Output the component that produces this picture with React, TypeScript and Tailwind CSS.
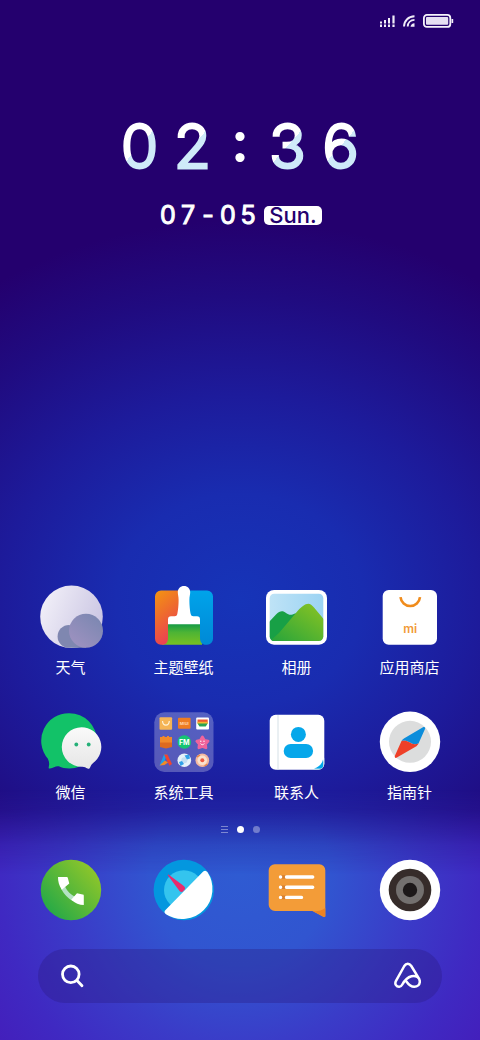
import type { ReactNode } from "react";

type AppItem = {
  name: string;
  icon: ReactNode;
};

function WeatherIcon() {
  return (
    <>
      <defs>
        <linearGradient id="moon" x1="0" y1="0.3" x2="1" y2="0.7">
          <stop offset="0" stopColor="#f1eff8" />
          <stop offset="1" stopColor="#c9c4e2" />
        </linearGradient>
        <linearGradient id="cloud" x1="0" y1="1" x2="0.8" y2="0">
          <stop offset="0" stopColor="#a293c2" />
          <stop offset="1" stopColor="#7b87b1" />
        </linearGradient>
      </defs>
      <circle cx="32.5" cy="31.8" r="31.3" fill="url(#moon)" />
      <path d="M30 40a11.4 11.4 0 0 0 0 22.8h17V46z" fill="#7f87b0" />
      <circle cx="47" cy="45.8" r="17" fill="url(#cloud)" />
    </>
  );
}

function ThemeIcon() {
  return (
    <>
      <defs>
        <linearGradient id="themeWarm" x1="0" y1="0" x2="0.4" y2="1">
          <stop offset="0" stopColor="#f39511" />
          <stop offset="0.5" stopColor="#ee6a2e" />
          <stop offset="1" stopColor="#ea3f55" />
        </linearGradient>
        <linearGradient id="themeBlue" x1="0" y1="0" x2="0" y2="1">
          <stop offset="0" stopColor="#00a3ea" />
          <stop offset="1" stopColor="#0089d6" />
        </linearGradient>
        <linearGradient id="themeGreen" x1="0" y1="0" x2="0" y2="1">
          <stop offset="0" stopColor="#159a45" />
          <stop offset="0.4" stopColor="#4db435" />
          <stop offset="1" stopColor="#78c022" />
        </linearGradient>
      </defs>
      <path d="M14 39h36v20.800H10z" fill="url(#themeGreen)" />
      <path d="M9 5.5h19V33H16v20c0 4-2 6.8-6 6.8H9a6 6 0 0 1-6-6V11.500a6 6 0 0 1 6-6z" fill="url(#themeWarm)" />
      <path d="M55 5.500H36V33h12v20c0 4 2 6.800 6 6.800h1a6 6 0 0 0 6-6V11.500a6 6 0 0 0-6-6z" fill="url(#themeBlue)" />
      <path
        d="M32 1c3.600 0 6.200 2.600 6.200 6.200 0 2.500-.8 4-.8 7.800 0 5 .6 11 1.300 14 .4 1.600 1.200 2.200 2.600 2.200H45c2 0 3 1 3 3v5.100H16v-5.100c0-2 1-3 3-3h3.700c1.400 0 2.200-.6 2.600-2.200.7-3 1.300-9 1.300-14 0-3.800-.8-5.300-.8-7.800C25.800 3.600 28.400 1 32 1z"
        fill="#fff"
      />
    </>
  );
}

function GalleryIcon() {
  return (
    <>
      <defs>
        <linearGradient id="sky" x1="0" y1="0" x2="1" y2="0">
          <stop offset="0" stopColor="#bfe3f6" />
          <stop offset="1" stopColor="#9bd3f3" />
        </linearGradient>
        <linearGradient id="hill" x1="0" y1="1" x2="1" y2="0">
          <stop offset="0" stopColor="#23a33c" />
          <stop offset="1" stopColor="#8cc422" />
        </linearGradient>
        <clipPath id="photo">
          <rect x="4.700" y="8.700" width="53.600" height="47.400" rx="4.500" />
        </clipPath>
      </defs>
      <rect x="1" y="5" width="61" height="54.700" rx="8" fill="#fff" />
      <g clipPath="url(#photo)">
        <rect x="4" y="8" width="55" height="49" fill="url(#sky)" />
        <path d="M4 37l7-7.500c4-4 7-4 10-1.500 3 2 5 2.500 9 .5h6V57H4z" fill="#18a046" />
        <path d="M4 57l10-9 19-22.500c2-2.200 3-3 5-4.500 4.500-3.500 7.500-3 11 1.500l10 12V57z" fill="url(#hill)" />
      </g>
    </>
  );
}

function StoreIcon() {
  return (
    <>
      <rect x="4.700" y="5" width="54.300" height="54.700" rx="6" fill="#fff" />
      <path d="M22.500 12.200a9.800 9.800 0 0 0 19.500 0" fill="none" stroke="#f08c1c" strokeWidth="2.600" />
      <text x="32.200" y="48.300" textAnchor="middle" fill="#f29a38" className="font-['Inter'] text-[12px] font-semibold">
        mi
      </text>
    </>
  );
}

function WechatIcon() {
  return (
    <>
      <defs>
        <linearGradient id="bubble" x1="0" y1="0" x2="0" y2="1">
          <stop offset="0" stopColor="#fafafa" />
          <stop offset="1" stopColor="#e6e6e6" />
        </linearGradient>
      </defs>
      <path
        d="M30.300 3.200a27.600 27.600 0 1 1 0 55.300c-4 0-7.500-.8-10.500-2.200-3-.6-5.500 1.500-8.800 2.200-1 .3-1.500-.2-1.300-1.200.8-3 .6-5.500-.8-8.500A27.600 27.600 0 0 1 30.300 3.200z"
        fill="#12c268"
      />
      <path
        d="M42.600 17.200a19.800 19.800 0 0 1 11 36.200c-2 1.800-2 3.200-3 4.800-.6.800-1.200.8-2 .4-2-1-3.200-2-6-1.800A19.800 19.800 0 1 1 42.600 17.200z"
        fill="url(#bubble)"
      />
      <circle cx="37.300" cy="34.500" r="1.900" fill="#25b078" />
      <circle cx="49.700" cy="34.500" r="1.900" fill="#25b078" />
    </>
  );
}

function FolderIcon() {
  return (
    <>
      <rect x="2.300" y="2.300" width="59.200" height="59.700" rx="10" fill="#fff" fillOpacity="0.26" />

      <rect x="7.500" y="7.200" width="12.600" height="12.600" rx="1" fill="#f5b455" />
      <path d="M10.500 11c.4 5.500 6.400 5.500 6.800 0" fill="none" stroke="#fff3d8" strokeWidth="1.200" />

      <rect x="26" y="7.800" width="12.600" height="11" rx="1" fill="#ee7c22" />
      <text x="32.300" y="15" textAnchor="middle" fill="#ffd9b0" className="font-['Inter'] text-[4px] font-bold">
        MIUI
      </text>

      <rect x="44.200" y="7.500" width="12.800" height="12" rx="1" fill="#fff" />
      <path d="M45.500 9.500h10.200V13H45.500z" fill="#ef5a33" />
      <path d="M45.500 11.800h10.200V14H45.500z" fill="#f5b62e" />
      <path d="M45.500 13.500h10.200l-2 3h-6.200z" fill="#2aa454" />

      <path d="M8 27h2.500v-1h2v1h2.500v-1h2v1H20v6H8z" fill="#f08a2c" />
      <path d="M8 32.500h12V37l-6 1.500L8 37z" fill="#dd6a20" />

      <circle cx="32.300" cy="32" r="6.800" fill="#16c572" />
      <text x="32.300" y="34.500" textAnchor="middle" fill="#fff" className="font-['Inter'] text-[7px] font-bold">
        FM
      </text>

      <path
        d="M50.400 27l1.900 3.300 3.700.9-2.500 2.900.4 3.700-3.500-1.300-3.500 1.300.4-3.700-2.500-2.900 3.700-.9z"
        fill="#f0649c"
        stroke="#f0649c"
        strokeWidth="2.800"
        strokeLinejoin="round"
      />
      <path d="M48.500 33.500c.8 1.600 3 1.600 3.800 0" fill="none" stroke="#fff" strokeWidth="0.900" />
      <circle cx="48.800" cy="31.300" r="0.700" fill="#fff" />
      <circle cx="52" cy="31.300" r="0.700" fill="#fff" />

      <path d="M12 44.500h3l-3.500 9.500-4 1.500z" fill="#1da0ea" />
      <path d="M12 44.500h3.400L20 54l-2.500 1.800z" fill="#ef4430" />
      <path d="M7.500 55.500l5.500-5 3 2-3.500 2.500z" fill="#f28a26" />

      <circle cx="32.300" cy="50.300" r="6.800" fill="#e6f2fa" />
      <circle cx="32.300" cy="50.300" r="3" fill="#c3dff2" />
      <path d="M32.500 45.500l4.500-1 1 4-3 1zM27 52l3-1 2 3-3.500 2z" fill="#30a1e8" />

      <circle cx="50.300" cy="50.300" r="6.800" fill="#f4b9a0" />
      <circle cx="50.300" cy="50.300" r="4.800" fill="#fae3cd" />
      <circle cx="50.300" cy="50.300" r="2" fill="#ee5a41" />
      <path d="M45 47l3-2M55.500 54l-3 2" stroke="#e9853f" strokeWidth="1.200" />
    </>
  );
}

function ContactsIcon() {
  return (
    <>
      <rect x="4.700" y="4.700" width="54.600" height="55" rx="6" fill="#fff" />
      <path d="M13 5v54.700" stroke="#d5e0e6" strokeWidth="1" />
      <path d="M59.300 47.500v6.200a6 6 0 0 1-6 6h-6.800c6.800-1 11.800-5.500 12.800-12.200z" fill="#b3d9ea" />
      <path d="M58 49.500v6.500c0 1.400-1 2.500-2.500 2.500H49c4.800-1.200 8-4.500 9-9z" fill="#00a5ea" />
      <circle cx="33.400" cy="24.400" r="7.500" fill="#06a7ea" />
      <rect x="18.700" y="34" width="29.400" height="14" rx="7" fill="#06a7ea" />
    </>
  );
}

function CompassIcon() {
  return (
    <>
      <circle cx="32" cy="31.800" r="30.200" fill="#fff" />
      <circle cx="32" cy="31.800" r="21" fill="#dcdddd" />
      <path d="M23.500 31c.6-1 1.500-2 2.800-2.800L45 17.200c1.500-.8 2.600.2 2 1.800l-6.500 14.500c-3.500 1.200-6.300.7-9-1.200-2.500-1.800-5-2-8-1.300z" fill="#0c8ddb" />
      <path d="M23.500 31l-6.600 14.800c-.6 1.600.5 2.600 2 1.800l18.600-10.800c1.300-.8 2.400-2 3-3.300-3.500 1.200-6.300.7-9-1.200-2.500-1.800-5-2-8-1.300z" fill="#ee4028" />
    </>
  );
}

function PhoneIcon() {
  return (
    <>
      <defs>
        <linearGradient id="call" x1="0.100" y1="0.850" x2="0.900" y2="0.150">
          <stop offset="0" stopColor="#25a947" />
          <stop offset="1" stopColor="#8fc62a" />
        </linearGradient>
      </defs>
      <circle cx="32" cy="32" r="30.200" fill="url(#call)" />
      <path d="M22 30l4-1.500c2.500 5 5.500 8 10.500 10.500L34 43c-5-2.500-9.500-7-12-13z" fill="#b4e2c4" />
      <path d="M19 19h8.500c.8 0 1.300.4 1.400 1.200l1.400 5.300-7.500 6.300C20 27.500 19 23.500 19 19z" fill="#fff" />
      <path d="M44.800 47v-9.300c0-.8-.4-1.300-1.200-1.300L38 35.200l-5.800 6.500C36 45.200 40.500 47 44.800 47z" fill="#fff" />
    </>
  );
}

function BrowserIcon() {
  return (
    <>
      <circle cx="31.800" cy="32" r="30.200" fill="#0397df" />
      <circle cx="31.800" cy="32" r="19.800" fill="#34c4ee" />
      <path d="M15.800 17.200c0-.6.600-.8 1-.4l13.700 10.200c2.500 1.800 3 3 2.200 4.500l-2.500 2.500c-1.500.2-2.600-.6-3.600-2.200z" fill="#ea2b6c" />
      <path d="M51.200 13.600c1.600-1.500 3-1.200 4.200.5A30.200 30.200 0 0 1 14 56.300c-1.800-1.400-2-2.700-.5-4.200z" fill="#fff" />
    </>
  );
}

function MessagesIcon() {
  return (
    <>
      <path d="M10 6.300h44.300a6 6 0 0 1 6 6V58c0 1-.6 1.300-1.400.9L47.500 53H10a6.300 6.300 0 0 1-6.300-6V12.300a6 6 0 0 1 6.300-6z" fill="#f39c38" />
      <path d="M47.500 53c4 .8 8.500 0 12.800-3v8c0 1-.6 1.300-1.400.9z" fill="#ee8322" />
      <g stroke="#d9802e" strokeWidth="3.600">
        <path d="M16 19h4M16 29.200h4M16 39.400h4" />
      </g>
      <g stroke="#fff" strokeWidth="3.400" strokeLinecap="round">
        <path d="M15.500 19h.1M15.500 29.200h.1M15.500 39.400h.1M21.500 19h26.200M21.500 29.200h26.200M21.500 39.400h15" />
      </g>
    </>
  );
}

function CameraIcon() {
  return (
    <>
      <circle cx="32" cy="32" r="30.200" fill="#fff" />
      <circle cx="32" cy="32" r="21.300" fill="#362c2a" />
      <circle cx="32" cy="32" r="14" fill="#73706f" />
      <circle cx="32" cy="32" r="7.200" fill="#1c1819" />
    </>
  );
}

const apps: AppItem[] = [
  { name: "天气", icon: <WeatherIcon /> },
  { name: "主题壁纸", icon: <ThemeIcon /> },
  { name: "相册", icon: <GalleryIcon /> },
  { name: "应用商店", icon: <StoreIcon /> },
  { name: "微信", icon: <WechatIcon /> },
  { name: "系统工具", icon: <FolderIcon /> },
  { name: "联系人", icon: <ContactsIcon /> },
  { name: "指南针", icon: <CompassIcon /> },
];

const dock: AppItem[] = [
  { name: "电话", icon: <PhoneIcon /> },
  { name: "浏览器", icon: <BrowserIcon /> },
  { name: "短信", icon: <MessagesIcon /> },
  { name: "相机", icon: <CameraIcon /> },
];

function AppButton({ app, showLabel }: { app: AppItem; showLabel?: boolean }) {
  return (
    <button type="button" aria-label={app.name} className="flex flex-col items-center gap-2">
      <svg viewBox="0 0 64 64" className="size-16 overflow-visible" aria-hidden="true">
        {app.icon}
      </svg>
      {showLabel && <span className="text-[15px] leading-5 whitespace-nowrap">{app.name}</span>}
    </button>
  );
}

function StatusBar() {
  return (
    <header className="flex h-[42px] items-center justify-end gap-2 pr-[26px]">
      <svg viewBox="0 0 15 12" className="h-3 w-[15px]" fill="#f1edf8" aria-hidden="true">
        <path d="M0 9.500h2V12H0zM4 9.500h2V12H4zM8 9.500h2V12H8zM12.400 9.500h2.200V12h-2.200z" />
        <path d="M0 6.500h2v2H0zM4 5h2v3.500H4zM8 3h2v5.500H8zM12.400.5h2.200v8h-2.200z" />
      </svg>
      <svg viewBox="0 0 12 12" className="size-3" fill="none" stroke="#f1edf8" strokeWidth="1.900" aria-hidden="true">
        <path d="M1 11.500C1.200 5.500 5.500 1.500 11.500 1.300M4.700 11.500c.1-3.800 2.900-6.500 6.800-6.600" />
        <path d="M7.500 11.800c.2-2 1.800-3.500 4-3.600v3.600z" fill="#f1edf8" stroke="none" />
      </svg>
      <svg viewBox="0 0 31 14" className="h-3.5 w-[31px]" aria-hidden="true">
        <rect x="0.900" y="0.900" width="26.400" height="12" rx="3" fill="none" stroke="#f6f3fb" strokeWidth="1.800" />
        <rect x="3" y="3" width="22.200" height="7.800" rx="1" fill="#e6dff2" />
        <path d="M28.500 5h1.700v4h-1.700z" fill="#f1edf8" />
      </svg>
    </header>
  );
}

const digit =
  "w-[53px] text-center font-light bg-linear-to-br from-white from-50% to-[#cfeaf9] to-50% bg-clip-text text-transparent [-webkit-text-stroke:3px_transparent]";

function Clock() {
  return (
    <section className="mt-[74px] flex flex-col items-center font-['Inter',sans-serif]">
      <time className="flex items-start text-[60px] leading-[60px]">
        <span className={digit}>0</span>
        <span className={digit}>2</span>
        <span className="w-[42px] text-center font-['Lato',sans-serif] leading-[46px] font-bold">:</span>
        <span className={digit}>3</span>
        <span className={digit}>6</span>
      </time>
      <div className="mt-[26px] flex items-center gap-1.5">
        <time className="flex text-[25px] leading-[26px] [-webkit-text-stroke:1px_white]">
          {"07-05".split("").map((char, index) => (
            <span key={index} className="w-5 text-center">
              {char}
            </span>
          ))}
        </time>
        <span className="flex h-[19px] w-[58px] items-center justify-center rounded-[5px] bg-white text-[22px] leading-5 font-medium text-[#24006e]">
          Sun.
        </span>
      </div>
    </section>
  );
}

function PageDots() {
  return (
    <div className="mt-[22px] flex h-2.5 items-center justify-center gap-[9px]">
      <svg viewBox="0 0 7 7" className="size-[7px]" stroke="#fff" strokeOpacity="0.4" aria-hidden="true">
        <path d="M0 .5h7M0 3.500h7M0 6.500h7" />
      </svg>
      <span className="size-[7px] rounded-full bg-white" />
      <span className="size-[7px] rounded-full bg-white/35" />
    </div>
  );
}

function SearchBar() {
  return (
    <form className="mx-[38px] mt-[27px] flex h-[54px] items-center rounded-full bg-[#2b1a80]/35 px-[21px]">
      <button type="button" aria-label="搜索">
        <svg viewBox="0 0 28 28" className="size-7" fill="none" stroke="#fff" strokeWidth="2.800" strokeLinecap="round" aria-hidden="true">
          <circle cx="11.800" cy="12.300" r="8.300" />
          <path d="M18 18.500l5 5.300" />
        </svg>
      </button>
      <input type="text" aria-label="搜索内容" className="h-full min-w-0 flex-1 bg-transparent px-2 outline-none" />
      <button type="button" aria-label="语音助手">
        <svg viewBox="0 0 28 28" className="size-7" fill="none" stroke="#fff" strokeWidth="2.500" strokeLinecap="round" strokeLinejoin="round" aria-hidden="true">
          <path d="M26.300 17.200L18.300 4c-2-3-5.200-3-7 0L3 18.800c-1.800 3.500.6 6.200 3.300 6 1.500-.1 2.300-1 3-2.300 1.800-3.200 4.500-7 9.200-8.200 4.500-1 8.300 1.200 8.300 5.200 0 3.200-2.500 5.300-5.500 5.300-4 0-6-2.500-8.300-5.800" />
        </svg>
      </button>
    </form>
  );
}

export default function App() {
  return (
    <div className="relative isolate flex min-h-screen flex-col overflow-hidden bg-[#24006e] bg-[radial-gradient(442px_380px_at_50%_600px,#1634b8_0%,#192cb0_28%,#1d1b9b_54%,#200b80_80%,#24006e_100%)] pb-[37px] font-['Noto_Sans_CJK_SC',sans-serif] text-white">
      {/* floor glow behind the dock */}
      <div className="absolute inset-x-0 bottom-0 -z-10 h-[250px] bg-[radial-gradient(circle_at_50%_85px,#2f5bd2_0px,#3155d0_90px,#3a3cc8_170px,#3f29c2_240px,#451ab8_320px)] mask-[linear-gradient(to_bottom,transparent_0px,rgb(0_0_0/0.15)_20px,rgb(0_0_0/0.75)_55px,black_85px)]" />

      <StatusBar />
      <Clock />

      <main className="mt-auto">
        <div className="grid grid-cols-4 gap-y-[33px] px-3.5">
          {apps.map((app) => (
            <AppButton key={app.name} app={app} showLabel />
          ))}
        </div>
        <PageDots />
        <nav className="mt-6 grid grid-cols-4 px-3.5">
          {dock.map((app) => (
            <AppButton key={app.name} app={app} />
          ))}
        </nav>
        <SearchBar />
      </main>
    </div>
  );
}
